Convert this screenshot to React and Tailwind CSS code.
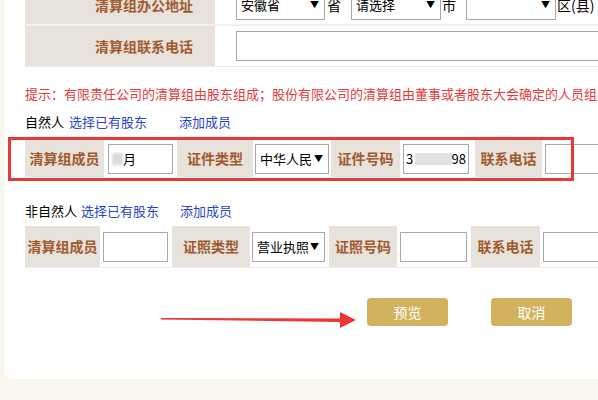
import React from 'react';

const font = { fontFamily: '"Noto Sans CJK SC", "Noto Sans", sans-serif' };

const Select = ({ value, className = '' }) => (
  <div className={`flex items-center h-[30px] border border-[#a9a9a9] bg-white pl-[4px] pr-[5px] overflow-hidden ${className}`}>
    <span className="flex-1 overflow-hidden whitespace-nowrap text-[13px] text-black">{value}</span>
    <span className="text-[9px] text-black ml-[2px]">▼</span>
  </div>
);

const Label = ({ children, className = '' }) => (
  <div className={`flex items-center justify-center self-stretch bg-[#e8e2dc] text-[14px] font-bold text-[#a05a2c] whitespace-nowrap ${className}`}>
    {children}
  </div>
);

const Input = ({ className = '', children }) => (
  <div className={`flex items-center h-[30px] border border-[#a9a9a9] bg-white px-[2px] text-[13px] text-black overflow-hidden whitespace-nowrap ${className}`}>
    {children}
  </div>
);

const App = () => {
  return (
    <div className="relative w-[598px] h-[400px] overflow-hidden bg-[#f9f6ee]" style={font}>
      <div className="relative ml-[5px] w-[620px] h-[379px] bg-white rounded-bl-[6px] overflow-hidden pl-[20px]">
        {/* address / phone table */}
        <div className="-mt-[14px]">
          <div className="flex h-[40px] border-b-2 border-[#f0f0f0]">
            <div className="w-[190px] bg-[#e8e2dc] flex items-center justify-end pr-[22px] text-[14px] font-bold text-[#a05a2c]">
              清算组办公地址
            </div>
            <div className="flex items-center pl-[21px] text-[14px] text-black">
              <Select value="安徽省" className="w-[89px]" />
              <span className="ml-[2px]">省</span>
              <Select value="请选择" className="w-[90px] ml-[10px]" />
              <span className="ml-[1px]">市</span>
              <Select value="" className="w-[90px] ml-[10px]" />
              <span className="ml-[1px]">区(县)</span>
            </div>
          </div>
          <div className="flex h-[41px] border-b border-[#ececec]">
            <div className="w-[190px] bg-[#e8e2dc] flex items-center justify-end pr-[22px] text-[14px] font-bold text-[#a05a2c]">
              清算组联系电话
            </div>
            <div className="flex items-center pl-[21px]">
              <Input className="w-[380px]" />
            </div>
          </div>
        </div>

        <p className="mt-[19px] text-[13px] leading-[16px] text-[#e4393c] whitespace-nowrap">
          提示：有限责任公司的清算组由股东组成；股份有限公司的清算组由董事或者股东大会确定的人员组成
        </p>

        {/* natural persons */}
        <div className="mt-[12px] flex text-[13px] leading-[16px] whitespace-nowrap">
          <span className="text-black">自然人</span>
          <a className="ml-[5px] text-[#2a44c9]">选择已有股东</a>
          <a className="ml-[32px] text-[#2a44c9]">添加成员</a>
        </div>
        <div className="mt-[10px] flex items-center h-[37px]">
          <Label className="w-[79px]">清算组成员</Label>
          <div className="w-[72px] pl-[4px]">
            <Input className="w-[65px]">
              <span className="inline-block w-[11px] h-[12px] bg-[#dcdcdc] blur-[1px] ml-[1px]" />
              <span>月</span>
            </Input>
          </div>
          <Label className="w-[76px] ml-[1px]">证件类型</Label>
          <div className="w-[78px] pl-[2px]">
            <Select value="中华人民共和国居民身份证" className="w-[74px]" />
          </div>
          <Label className="w-[69px]">证件号码</Label>
          <div className="w-[75px] pl-[3px]">
            <Input className="w-[66px]">
              <span>3</span>
              <span className="inline-block w-[42px] h-[12px] bg-[#e2e2e2] ml-[2px]" />
              <span>98</span>
            </Input>
          </div>
          <Label className="w-[67px]">联系电话</Label>
          <div className="pl-[3px]">
            <Input className="w-[80px]" />
          </div>
        </div>

        {/* non-natural persons */}
        <div className="mt-[26px] flex text-[13px] leading-[16px] whitespace-nowrap">
          <span className="text-black">非自然人</span>
          <a className="ml-[4px] text-[#2a44c9]">选择已有股东</a>
          <a className="ml-[21px] text-[#2a44c9]">添加成员</a>
        </div>
        <div className="mt-[7px] flex items-center h-[42px] border-b border-[#ececec]">
          <Label className="w-[75px]">清算组成员</Label>
          <div className="w-[72px] pl-[3px]">
            <Input className="w-[65px]" />
          </div>
          <Label className="w-[78px]">证照类型</Label>
          <div className="w-[79px] pl-[2px]">
            <Select value="营业执照" className="w-[73px]" />
          </div>
          <Label className="w-[68px]">证照号码</Label>
          <div className="w-[74px] pl-[3px]">
            <Input className="w-[67px]" />
          </div>
          <Label className="w-[69px]">联系电话</Label>
          <div className="pl-[3px]">
            <Input className="w-[80px]" />
          </div>
        </div>

        {/* buttons */}
        <div className="mt-[30px] ml-[342px] flex gap-[43px]">
          <button className="w-[81px] h-[28px] rounded-[4px] bg-[#d3b25f] text-white text-[14px]">预览</button>
          <button className="w-[81px] h-[28px] rounded-[4px] bg-[#d3b25f] text-white text-[14px]">取消</button>
        </div>
      </div>

      {/* annotation: red box */}
      <div className="absolute left-[8px] top-[137px] w-[566px] h-[44px] border-[3px] border-[#e8393a]" />

      {/* annotation: arrow */}
      <svg className="absolute left-0 top-0" width="598" height="400" viewBox="0 0 598 400">
        <polygon points="161,318 340,318.5 340,312 356,320 340,328 340,322 161,319.5" fill="#ee3535" />
      </svg>
    </div>
  );
};

export default App;
